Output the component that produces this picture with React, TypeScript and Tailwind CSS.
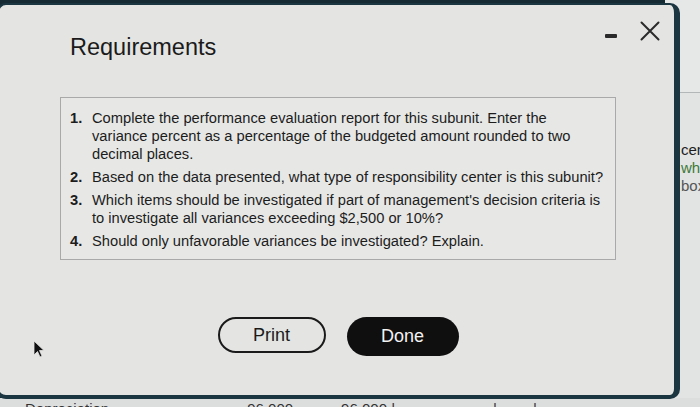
const ITEMS: { n: string; lines: string[] }[] = [
  {
    n: '1.',
    lines: [
      'Complete the performance evaluation report for this subunit. Enter the',
      'variance percent as a percentage of the budgeted amount rounded to two',
      'decimal places.',
    ],
  },
  { n: '2.', lines: ['Based on the data presented, what type of responsibility center is this subunit?'] },
  {
    n: '3.',
    lines: [
      "Which items should be investigated if part of management's decision criteria is",
      'to investigate all variances exceeding $2,500 or 10%?',
    ],
  },
  { n: '4.', lines: ['Should only unfavorable variances be investigated? Explain.'] },
];

export default function App() {
  return (
    <div
      className="relative h-[407px] w-[700px] overflow-hidden bg-[#162a33]"
      style={{ fontFamily: '"Liberation Sans", Arial, sans-serif' }}
    >
      {/* page behind the dialog */}
      <div className="absolute left-[665px] top-0 flex h-full w-[35px] flex-col bg-[#e2e4e4]">
        <div className="h-[93px] border-b border-[#b3b7b8] bg-[#e6e8e8]" />
        <div className="mt-[48px] flex flex-col pl-[16px] text-[15px] leading-[18px]">
          <span className="text-[#1d1d1d]">cen</span>
          <span className="text-[#3d7a3a]">whe</span>
          <span className="text-[#555]">box</span>
        </div>
      </div>
      <div className="absolute left-0 top-[398px] flex h-[12px] w-full items-start bg-[#dcdede] text-[15px] leading-[18px] text-[#333]">
        <span className="ml-[25px] mt-[2px]">Depreciation</span>
        <span className="ml-[138px] mt-[2px]">96,000</span>
        <span className="ml-[48px] mt-[2px]">96,000 |</span>
        <span className="ml-[98px] mt-[2px]">|</span>
        <span className="ml-[36px] mt-[2px]">|</span>
      </div>

      {/* dialog */}
      <div className="absolute left-[-4px] top-[3px] h-[396px] w-[684px] rounded-[10px] border-b-[4px] border-l-[3px] border-r-[6px] border-t-[2px] border-[#1b3641] bg-[#e4e5e3]">
        <div className="flex items-start">
          <h1 className="ml-[71px] mt-[28px] text-[23.5px] leading-[28px] text-[#1b1b1b]">Requirements</h1>
          <div className="ml-auto mr-[14px] mt-[16px] flex items-start gap-[23px]">
            <div className="mt-[13px] h-[4px] w-[12px] rounded-[1px] bg-[#2a2a2a]" />
            <svg width="20" height="20" viewBox="0 0 20 20" className="text-[#2a2a2a]">
              <path d="M1.5 1.5 L18.5 18.5 M18.5 1.5 L1.5 18.5" stroke="currentColor" strokeWidth="2" strokeLinecap="round" />
            </svg>
          </div>
        </div>

        <div className="ml-[61px] mt-[36px] w-[556px]">
          <div className="h-[163px] border border-[#a8a9a8] bg-[#e7e8e6] pl-[9px] pt-[11px] text-[14.7px] leading-[18px] text-[#1c1c1c]">
            <ol className="flex flex-col gap-[5px]">
              {ITEMS.map(item => (
                <li key={item.n} className="flex">
                  <span className="w-[22px] shrink-0 font-bold">{item.n}</span>
                  <div className="flex flex-col whitespace-nowrap">
                    {item.lines.map(l => (
                      <span key={l}>{l}</span>
                    ))}
                  </div>
                </li>
              ))}
            </ol>
          </div>

          <div className="mt-[57px] flex justify-center gap-[21px]">
            <button className="flex h-[36px] w-[108px] items-center justify-center rounded-full border-2 border-[#1a1a1a] text-[18px] text-[#1a1a1a]">
              Print
            </button>
            <button className="flex h-[39px] w-[112px] items-center justify-center rounded-full bg-[#0f0f10] text-[18px] text-[#f2f2f2]">
              Done
            </button>
          </div>
        </div>

        {/* mouse pointer */}
        <svg className="absolute left-[34px] top-[335px]" width="12" height="18" viewBox="0 0 12 18">
          <path d="M1 1 L1 15 L4.5 11.5 L7 17 L9 16 L6.5 10.5 L11 10.5 Z" fill="#111" stroke="#e4e5e3" strokeWidth="0.8" />
        </svg>
      </div>
    </div>
  );
}
